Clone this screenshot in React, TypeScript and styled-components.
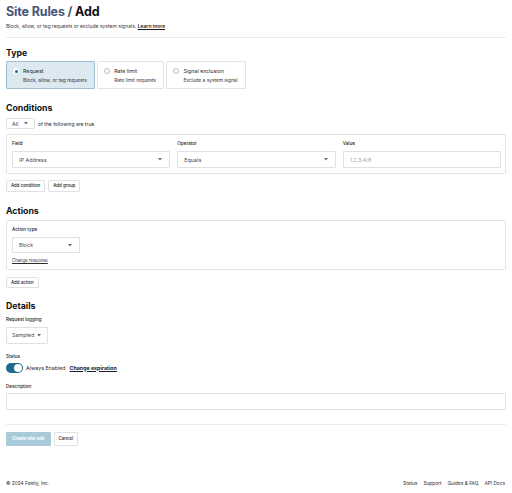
import React from "react";
import styled, { createGlobalStyle } from "styled-components";

const GlobalStyle = createGlobalStyle`
  html, body {
    margin: 0;
    padding: 0;
    background: #ffffff;
  }
  body {
    font-family: Inter, "Noto Sans", "Liberation Sans", sans-serif;
    color: #1b1b1f;
  }
  * {
    box-sizing: border-box;
  }
`;

const Page = styled.div`
  width: 512px;
  min-height: 493px;
  padding: 4px 6px 0;
  display: flex;
  flex-direction: column;
`;

const Title = styled.h1`
  margin: 0;
  font-size: 12.5px;
  line-height: 15px;
  font-weight: 700;
  letter-spacing: -0.15px;
  color: #111;

  span {
    color: #48557a;
  }
`;

const Subtitle = styled.p`
  margin: 3.5px 0 0;
  font-size: 5px;
  line-height: 7px;
  color: #3a3a3e;

  a {
    color: #1b1b1f;
    font-weight: 600;
    text-decoration: underline;
  }
`;

const Divider = styled.div<{ $top: number }>`
  height: 1px;
  background: #ececee;
  margin-top: ${(p) => p.$top}px;
`;

const SectionTitle = styled.h2<{ $top: number }>`
  margin: ${(p) => p.$top}px 0 0;
  font-size: 8.75px;
  line-height: 11px;
  font-weight: 700;
  color: #111;
`;

const TypeCards = styled.div`
  display: flex;
  gap: 2.5px;
  margin-top: 2.5px;
`;

const TypeCard = styled.div<{ $selected?: boolean }>`
  display: flex;
  align-items: flex-start;
  gap: 4px;
  height: 28px;
  padding: 5px 7px 5px 6px;
  border: 1px solid ${(p) => (p.$selected ? "#9fbfd0" : "#e3e3e6")};
  background: ${(p) => (p.$selected ? "#dce9f0" : "#ffffff")};
  border-radius: 1px;
`;

const Radio = styled.span<{ $checked?: boolean }>`
  position: relative;
  flex: none;
  width: 6px;
  height: 6px;
  margin-top: 1px;
  border-radius: 50%;
  border: ${(p) => (p.$checked ? "0" : "0.6px solid #b9b9bf")};
  background: #ffffff;

  &::after {
    content: "";
    display: ${(p) => (p.$checked ? "block" : "none")};
    position: absolute;
    left: 1.5px;
    top: 1.5px;
    width: 3px;
    height: 3px;
    border-radius: 50%;
    background: #1b6a8f;
  }
`;

const CardText = styled.div`
  display: flex;
  flex-direction: column;
  gap: 1px;
`;

const CardTitle = styled.div`
  font-size: 5.3px;
  line-height: 8px;
  color: #2a2a2f;
`;

const CardDesc = styled.div`
  font-size: 4.8px;
  line-height: 8px;
  color: #34343a;
`;

const MatchRow = styled.div`
  display: flex;
  align-items: center;
  gap: 3px;
  margin-top: 4px;
  font-size: 5px;
  color: #2b2b30;
`;

const SelectBox = styled.div<{ $width?: number; $height: number; $pad: number }>`
  display: flex;
  align-items: center;
  justify-content: space-between;
  gap: 2px;
  width: ${(p) => (p.$width ? `${p.$width}px` : "auto")};
  height: ${(p) => p.$height}px;
  padding: 0 ${(p) => p.$pad + 1}px 0 ${(p) => p.$pad}px;
  border: 1px solid #e1e1e5;
  border-radius: 1px;
  background: #fff;
  font-size: 5.4px;
  color: #4a4a50;
  white-space: nowrap;

  svg {
    flex: none;
  }
`;

const Arrow = () => (
  <svg width="4" height="3" viewBox="0 0 4 3">
    <path d="M0 0 L4 0 L2 2.4 Z" fill="#6a6a70" />
  </svg>
);

const Panel = styled.div<{ $top: number }>`
  margin-top: ${(p) => p.$top}px;
  border: 1px solid #e4e4e8;
  border-radius: 1px;
  padding: 5px 4px 5px 5px;
`;

const FieldGrid = styled.div`
  display: grid;
  grid-template-columns: repeat(3, 1fr);
  gap: 7px;
`;

const Field = styled.div<{ $top?: number }>`
  display: flex;
  flex-direction: column;
  align-items: flex-start;
  margin-top: ${(p) => p.$top ?? 0}px;
`;

const Label = styled.div<{ $gap?: number }>`
  font-size: 4.6px;
  line-height: 7px;
  font-weight: 500;
  color: #1b1b1f;
  margin-bottom: ${(p) => p.$gap ?? 4}px;
`;

const TextInput = styled.div<{ $height: number }>`
  align-self: stretch;
  display: flex;
  align-items: center;
  height: ${(p) => p.$height}px;
  padding: 0 6px;
  border: 1px solid #e1e1e5;
  border-radius: 1px;
  font-size: 5.3px;
  color: #a4a4aa;
`;

const SmallLink = styled.a`
  margin-top: 3.5px;
  font-size: 4.3px;
  line-height: 7px;
  color: #2b2b30;
  text-decoration: underline;
`;

const ButtonRow = styled.div<{ $top: number }>`
  display: flex;
  gap: 3px;
  margin-top: ${(p) => p.$top}px;
`;

const Button = styled.button<{ $height: number; $primary?: boolean }>`
  height: ${(p) => p.$height}px;
  padding: 0 ${(p) => (p.$primary ? 5 : 4)}px;
  border: 1px solid ${(p) => (p.$primary ? "#a9cbd9" : "#e1e1e5")};
  border-radius: 1px;
  background: ${(p) => (p.$primary ? "#a9cbd9" : "#ffffff")};
  color: ${(p) => (p.$primary ? "#ffffff" : "#1b1b1f")};
  font-family: inherit;
  font-size: 4.4px;
  font-weight: ${(p) => (p.$primary ? 700 : 500)};
  cursor: pointer;
`;

const StatusRow = styled.div`
  display: flex;
  align-items: center;
  gap: 3px;
  font-size: 5.3px;
  color: #2b2b30;

  a {
    margin-left: 1px;
    font-weight: 700;
    color: #1b1b1f;
    text-decoration: underline;
  }
`;

const Toggle = styled.span`
  position: relative;
  width: 17px;
  height: 10px;
  border-radius: 5px;
  background: #1b6a8f;

  &::after {
    content: "";
    position: absolute;
    right: 1px;
    top: 1px;
    width: 8px;
    height: 8px;
    border-radius: 50%;
    background: #ffffff;
  }
`;

const Footer = styled.footer`
  display: flex;
  justify-content: space-between;
  align-items: center;
  margin-top: auto;
  height: 19px;
  padding-bottom: 1px;
  font-size: 4.8px;
  color: #2b2b30;
`;

const FooterLinks = styled.nav`
  display: flex;
  gap: 6px;
  padding-right: 1px;
`;

const types = [
  { title: "Request", desc: "Block, allow, or tag requests", selected: true },
  { title: "Rate limit", desc: "Rate limit requests" },
  { title: "Signal exclusion", desc: "Exclude a system signal" },
];

export default function App() {
  return (
    <>
      <GlobalStyle />
      <Page>
        <Title>
          <span>Site Rules /</span> Add
        </Title>
        <Subtitle>
          Block, allow, or tag requests or exclude system signals. <a>Learn more</a>
        </Subtitle>
        <Divider $top={7.5} />

        <SectionTitle $top={9.5}>Type</SectionTitle>
        <TypeCards>
          {types.map((t) => (
            <TypeCard key={t.title} $selected={t.selected}>
              <Radio $checked={t.selected} />
              <CardText>
                <CardTitle>{t.title}</CardTitle>
                <CardDesc>{t.desc}</CardDesc>
              </CardText>
            </TypeCard>
          ))}
        </TypeCards>

        <SectionTitle $top={14}>Conditions</SectionTitle>
        <MatchRow>
          <SelectBox $width={29} $height={11} $pad={5}>
            All <Arrow />
          </SelectBox>
          of the following are true
        </MatchRow>
        <Panel $top={5}>
          <FieldGrid>
            <Field>
              <Label>Field</Label>
              <SelectBox $height={17} $pad={6} style={{ alignSelf: "stretch" }}>
                IP Address <Arrow />
              </SelectBox>
            </Field>
            <Field>
              <Label>Operator</Label>
              <SelectBox $height={17} $pad={6} style={{ alignSelf: "stretch" }}>
                Equals <Arrow />
              </SelectBox>
            </Field>
            <Field>
              <Label>Value</Label>
              <TextInput $height={17}>1.2.3.4/8</TextInput>
            </Field>
          </FieldGrid>
        </Panel>
        <ButtonRow $top={5.5}>
          <Button $height={12}>Add condition</Button>
          <Button $height={12}>Add group</Button>
        </ButtonRow>

        <SectionTitle $top={14}>Actions</SectionTitle>
        <Panel $top={3.5}>
          <Field>
            <Label>Action type</Label>
            <SelectBox $width={68} $height={16} $pad={6}>
              Block <Arrow />
            </SelectBox>
            <SmallLink>Change response</SmallLink>
          </Field>
        </Panel>
        <ButtonRow $top={7}>
          <Button $height={11}>Add action</Button>
        </ButtonRow>

        <SectionTitle $top={13.5}>Details</SectionTitle>
        <Field $top={3.5}>
          <Label>Request logging</Label>
          <SelectBox $width={42} $height={17} $pad={5}>
            Sampled <Arrow />
          </SelectBox>
        </Field>
        <Field $top={9}>
          <Label $gap={3}>Status</Label>
          <StatusRow>
            <Toggle />
            Always Enabled <a>Change expiration</a>
          </StatusRow>
        </Field>
        <Field $top={10}>
          <Label $gap={3}>Description</Label>
          <TextInput $height={17} />
        </Field>
        <Divider $top={14.5} />
        <ButtonRow $top={6.5}>
          <Button $height={14} $primary>
            Create site rule
          </Button>
          <Button $height={14}>Cancel</Button>
        </ButtonRow>

        <Footer>
          <span>© 2024 Fastly, Inc.</span>
          <FooterLinks>
            <span>Status</span>
            <span>Support</span>
            <span>Guides &amp; FAQ</span>
            <span>API Docs</span>
          </FooterLinks>
        </Footer>
      </Page>
    </>
  );
}
